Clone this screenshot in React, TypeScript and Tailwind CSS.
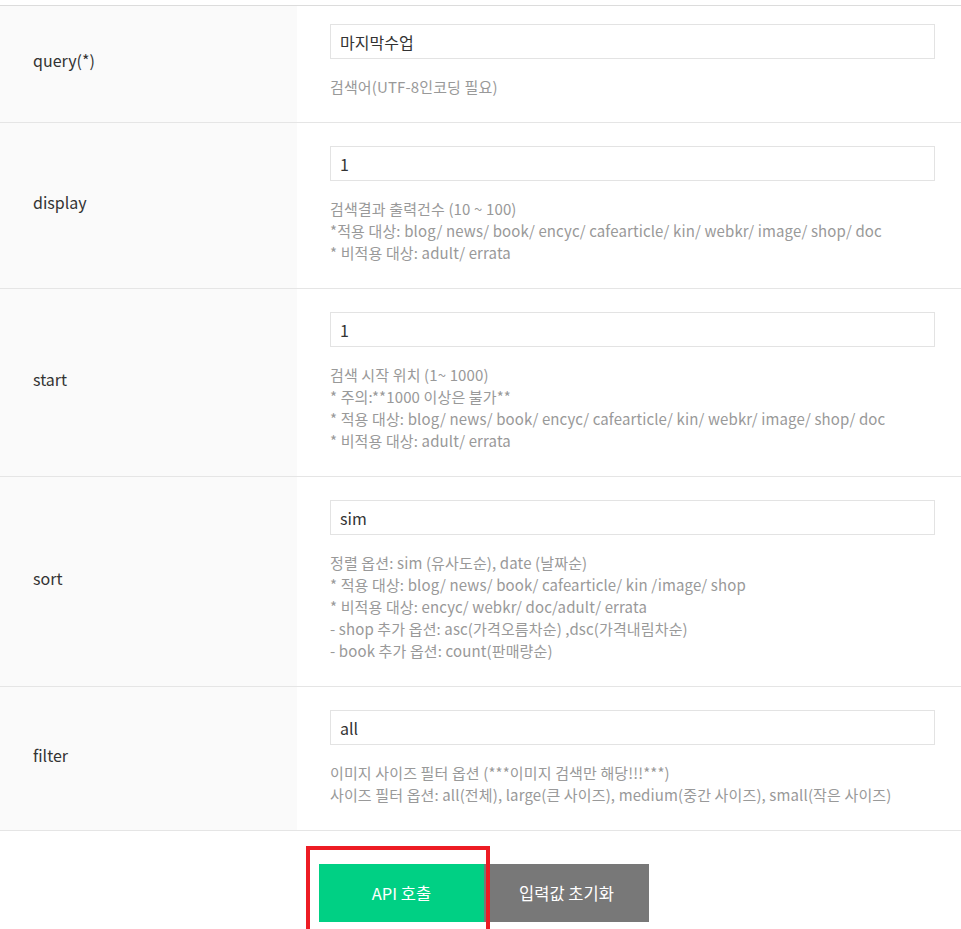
import type { ReactNode } from "react";

type Param = {
	name: string;
	value: string;
	desc: string[];
	padTop?: string;
};

const params: Param[] = [
	{ name: "query(*)", value: "마지막수업", desc: ["검색어(UTF-8인코딩 필요)"], padTop: "pt-[18px]" },
	{
		name: "display",
		value: "1",
		desc: [
			"검색결과 출력건수 (10 ~ 100)",
			"*적용 대상: blog/ news/ book/ encyc/ cafearticle/ kin/ webkr/ image/ shop/ doc",
			"* 비적용 대상: adult/ errata",
		],
	},
	{
		name: "start",
		value: "1",
		desc: [
			"검색 시작 위치 (1~ 1000)",
			"* 주의:**1000 이상은 불가**",
			"* 적용 대상: blog/ news/ book/ encyc/ cafearticle/ kin/ webkr/ image/ shop/ doc",
			"* 비적용 대상: adult/ errata",
		],
	},
	{
		name: "sort",
		value: "sim",
		desc: [
			"정렬 옵션: sim (유사도순), date (날짜순)",
			"* 적용 대상: blog/ news/ book/ cafearticle/ kin /image/ shop",
			"* 비적용 대상: encyc/ webkr/ doc/adult/ errata",
			"- shop 추가 옵션: asc(가격오름차순) ,dsc(가격내림차순)",
			"- book 추가 옵션: count(판매량순)",
		],
	},
	{
		name: "filter",
		value: "all",
		desc: [
			"이미지 사이즈 필터 옵션 (***이미지 검색만 해당!!!***)",
			"사이즈 필터 옵션: all(전체), large(큰 사이즈), medium(중간 사이즈), small(작은 사이즈)",
		],
	},
];

function Row({ p }: { p: Param }): ReactNode {
	return (
		<div className="flex border-b border-[#e5e5e5]">
			<div className="w-[297px] shrink-0 bg-[#fafafa] pl-[33px] flex items-center pb-[8px] text-[16px] text-[#333]">
				{p.name}
			</div>
			<div className={`flex-1 pl-[33px] pr-[26px] pb-[24px] ${p.padTop ?? "pt-[23px]"}`}>
				<input
					type="text"
					defaultValue={p.value}
					className="w-full h-[35px] border border-[#e3e3e3] px-[9px] text-[16px] text-[#333] outline-none"
				/>
				<div className="mt-[17px] text-[15px] leading-[22px] tracking-[0.13px] text-[#999]">
					{p.desc.map((d) => (
						<p key={d} className="whitespace-nowrap">
							{d}
						</p>
					))}
				</div>
			</div>
		</div>
	);
}

export default function App() {
	return (
		<div
			className="min-h-[929px] bg-white pt-[5px]"
			style={{ fontFamily: '"Noto Sans CJK KR", "Noto Sans", sans-serif' }}>
			<div className="border-t border-[#dcdcdc]">
				{params.map((p) => (
					<Row key={p.name} p={p} />
				))}
			</div>
			<div className="relative flex justify-center pl-[7px] pt-[33px]">
				<button className="w-[165px] h-[58px] bg-[#00d084] text-white text-[16.5px]">API 호출</button>
				<button className="w-[165px] h-[58px] bg-[#787878] text-white text-[16.5px]">입력값 초기화</button>
				<div className="absolute left-[306px] top-[15px] w-[184px] h-[100px] border-[4px] border-[#ed1c24]" />
			</div>
		</div>
	);
}
